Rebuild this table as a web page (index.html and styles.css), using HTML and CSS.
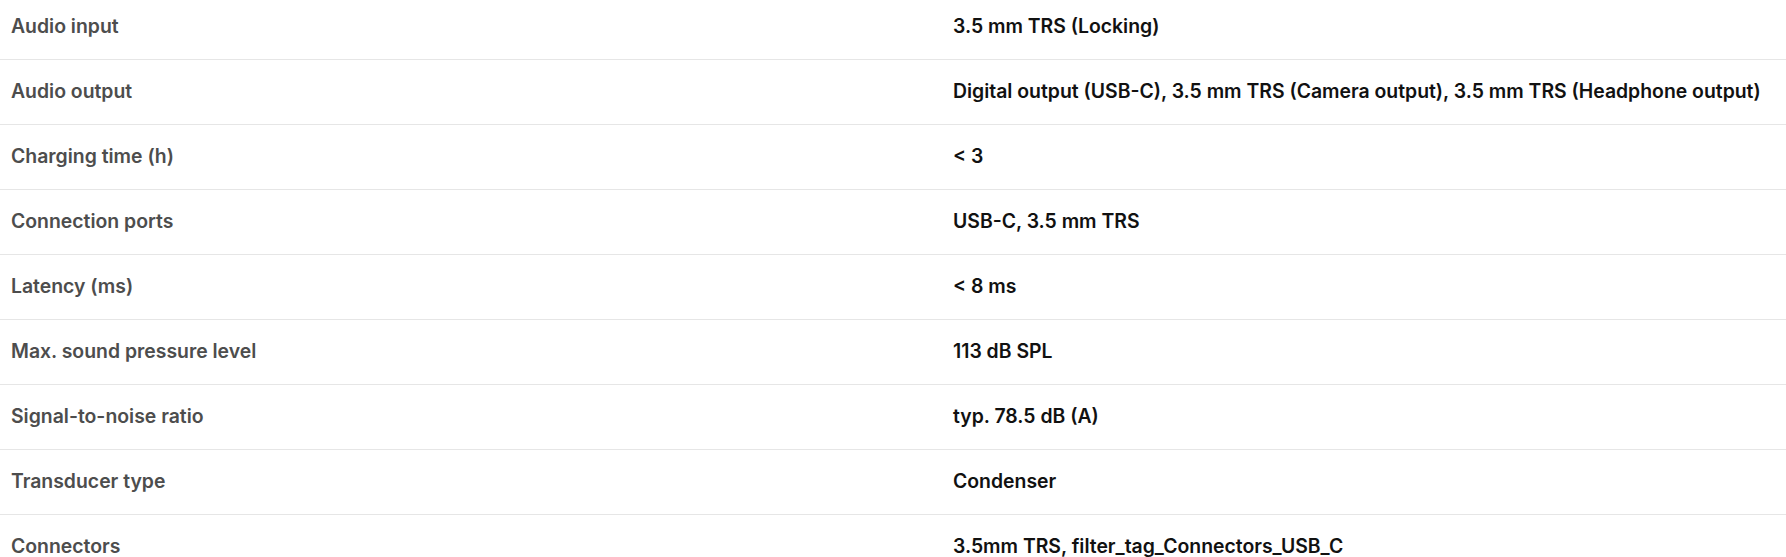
FILE: index.html
```html
<!DOCTYPE html>
<html lang="en">
<head>
<meta charset="utf-8">
<title>Specifications</title>
<link rel="stylesheet" href="styles.css">
</head>
<body>
<div class="specs">
  <div class="row"><div class="label">Audio input</div><div class="value">3.5 mm TRS (Locking)</div></div>
  <div class="row"><div class="label">Audio output</div><div class="value">Digital output (USB-C), 3.5 mm TRS (Camera output), 3.5 mm TRS (Headphone output)</div></div>
  <div class="row"><div class="label">Charging time (h)</div><div class="value">&lt; 3</div></div>
  <div class="row"><div class="label">Connection ports</div><div class="value">USB-C, 3.5 mm TRS</div></div>
  <div class="row"><div class="label">Latency (ms)</div><div class="value">&lt; 8 ms</div></div>
  <div class="row"><div class="label">Max. sound pressure level</div><div class="value">113 dB SPL</div></div>
  <div class="row"><div class="label">Signal-to-noise ratio</div><div class="value">typ. 78.5 dB (A)</div></div>
  <div class="row"><div class="label">Transducer type</div><div class="value">Condenser</div></div>
  <div class="row"><div class="label">Connectors</div><div class="value">3.5mm TRS, filter_tag_Connectors_USB_C</div></div>
</div>
</body>
</html>
```
FILE: styles.css
```css
html, body {
  margin: 0;
  padding: 0;
  background: #ffffff;
  overflow: hidden;
}
.specs {
  margin-top: -5px;
  font-family: Inter, "Noto Sans", "Liberation Sans", sans-serif;
  font-size: 19.4px;
  font-weight: 600;
}
.row {
  display: grid;
  grid-template-columns: 942px 1fr;
  align-items: center;
  height: 64px;
  box-sizing: content-box;
  padding-left: 11px;
  border-bottom: 1px solid #e6e6e6;
}
.label,
.value {
  padding-bottom: 2px;
}
.label {
  color: #4d4d4d;
}
.value {
  color: #111111;
}
```
